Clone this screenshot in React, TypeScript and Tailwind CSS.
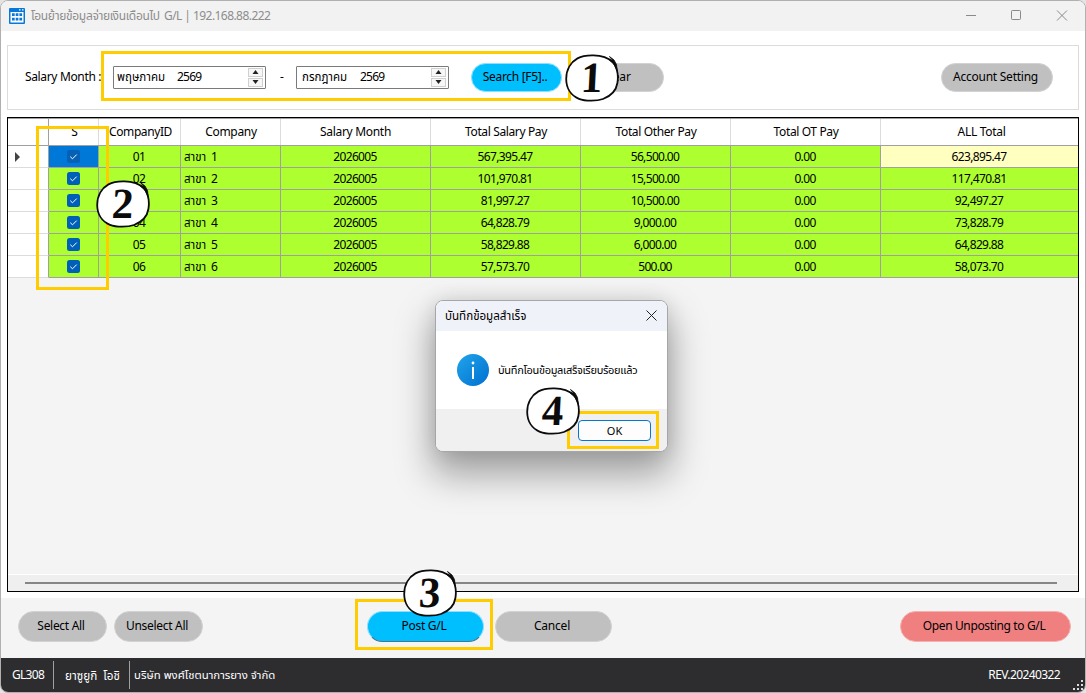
import React from 'react';

type Row = { id: string; name: string; month: string; salary: string; other: string; ot: string; all: string };

const rows: Row[] = [
  { id: '01', name: 'สาขา 1', month: '2026005', salary: '567,395.47', other: '56,500.00', ot: '0.00', all: '623,895.47' },
  { id: '02', name: 'สาขา 2', month: '2026005', salary: '101,970.81', other: '15,500.00', ot: '0.00', all: '117,470.81' },
  { id: '03', name: 'สาขา 3', month: '2026005', salary: '81,997.27', other: '10,500.00', ot: '0.00', all: '92,497.27' },
  { id: '04', name: 'สาขา 4', month: '2026005', salary: '64,828.79', other: '9,000.00', ot: '0.00', all: '73,828.79' },
  { id: '05', name: 'สาขา 5', month: '2026005', salary: '58,829.88', other: '6,000.00', ot: '0.00', all: '64,829.88' },
  { id: '06', name: 'สาขา 6', month: '2026005', salary: '57,573.70', other: '500.00', ot: '0.00', all: '58,073.70' },
];

const columns = 'grid grid-cols-[41px_50px_82px_100px_150px_150px_150px_150px_197px]';

function Pill({ label, className }: { label: string; className: string }) {
  return (
    <button className={`flex shrink-0 items-center justify-center rounded-full border pr-[3px] pb-px whitespace-nowrap ${className}`}>
      {label}
    </button>
  );
}

function MonthPicker({ month, year, className }: { month: string; year: string; className: string }) {
  return (
    <div className={`flex h-[23px] shrink-0 items-center rounded-[1px] border border-[#7a7a7a] bg-white pr-[2px] ${className}`}>
      <span className="whitespace-nowrap text-[11.5px]">{month}</span>
      <span className="ml-auto w-[71px] tracking-[-0.8px]">{year}</span>
      <span className="flex flex-col gap-px">
        <span className="flex h-[9px] w-[15px] items-center justify-center border border-[#d0d0d0] bg-[#f7f7f7]">
          <svg width="7" height="4" viewBox="0 0 7 4"><path d="M3.5 0L6.5 4H.5z" fill="#222" /></svg>
        </span>
        <span className="flex h-[9px] w-[15px] items-center justify-center border border-[#d0d0d0] bg-[#f7f7f7]">
          <svg width="7" height="4" viewBox="0 0 7 4"><path d="M3.5 4L6.5 0H.5z" fill="#222" /></svg>
        </span>
      </span>
    </div>
  );
}

function Check({ active }: { active: boolean }) {
  return (
    <svg width="13" height="13" viewBox="0 0 13 13">
      <rect width="13" height="13" rx="2.5" fill={active ? '#0560b6' : '#005fb8'} />
      <path d="M3.3 6.7L5.5 8.8L9.7 4.6" fill="none" stroke="#fff" strokeWidth="1" />
    </svg>
  );
}

function Step({ n, className }: { n: string; className: string }) {
  return (
    <div className={`absolute flex h-[48px] w-[54px] items-center justify-center ${className}`}>
      <svg className="absolute inset-0" width="54" height="48" viewBox="0 0 54 48">
        <path
          d="M27 1.4C35 1.1 43 3.6 48.5 8.5C52 14 53.6 22 52.4 29C51 38 44.5 42.5 38 45C32 47.2 20 47.3 14 44.8C6 41.5 1.2 34 1.2 25C1.2 15.5 6 8 12.5 4.4C17 2 22 1.5 27 1.4Z"
          fill="#fff"
          stroke="#0b0b0b"
          strokeWidth="1.8"
        />
        <path d="M44.5 2.5L49 6L51.5 10.5C51.8 13 52 15 52.2 17C50.5 12 48 8.5 43 5L48 7z" fill="#0b0b0b" stroke="#0b0b0b" strokeWidth=".8" />
      </svg>
      <span className="relative -skew-x-3 font-['Liberation_Serif',serif] text-[43px] leading-[48px] font-bold text-[#0b0b0b]">{n}</span>
    </div>
  );
}

function HeaderCell({ children, className = '' }: { children?: React.ReactNode; className?: string }) {
  return (
    <div className={`flex items-center justify-center overflow-hidden border-r border-[#dcdcdc] whitespace-nowrap ${className}`}>{children}</div>
  );
}

function Cell({ children, className = 'pt-px' }: { children: React.ReactNode; className?: string }) {
  return (
    <div className={`flex items-center justify-center border-r border-b border-[#a0a0a0] pr-px tracking-[-0.65px] whitespace-nowrap ${className}`}>
      {children}
    </div>
  );
}

export default function App() {
  return (
    <div className="h-[693px] w-[1086px] overflow-hidden bg-[#e4e4e4] font-['Noto_Sans','Noto_Sans_Thai','Loma',sans-serif] text-[12px] leading-[16px] text-black">
      <div className="relative flex h-[693px] w-[1086px] flex-col overflow-hidden rounded-[8px] border border-[#b0b0b0] bg-white">
        <header className="flex h-[30px] shrink-0 items-center bg-[#f2f2f2] pl-[8px] text-[#8d8d8d]">
          <svg width="16" height="16" viewBox="0 0 16 16" className="shrink-0">
            <rect width="16" height="16" rx="1" fill="#0878d8" />
            <path d="M1.5 4h13v10.5h-13z" fill="#fff" />
            <path d="M10 1.2h1.5v1.3H10zM13 1.2h1.5v1.3H13z" fill="#fff" />
            <path d="M3 5.3h2.7V8H3zM6.7 5.3h2.7V8H6.7zM10.4 5.3h2.7V8h-2.7zM3 9.7h2.7v2.7H3zM6.7 9.7h2.7v2.7H6.7zM10.4 9.7h2.7v2.7h-2.7z" fill="#0878d8" />
          </svg>
          <span className="ml-[6px] flex shrink-0 whitespace-nowrap">
            <span className="w-[133px] tracking-[-0.32px]">โอนย้ายข้อมูลจ่ายเงินเดือนไป</span>
            <span className="tracking-[-0.56px]">G/L | 192.168.88.222</span>
          </span>
          <svg className="mr-[17px] ml-auto -translate-y-px" width="102" height="12" viewBox="0 0 102 12" fill="none" stroke="#8a8a8a">
            <path d="M0 6.5h10M91 1.5l10 10M101 1.5l-10 10" />
            <rect x="45.5" y="1.5" width="9" height="9" rx=".8" />
          </svg>
        </header>

        <main className="flex h-[567px] shrink-0 flex-col px-[6px] pt-[14px]">
          <section className="flex h-[65px] w-[1072px] shrink-0 items-center border border-[#dcdcdc] pr-[25px] pb-px pl-[17px]">
            <span className="w-[88px] whitespace-nowrap tracking-[-0.35px]">Salary Month :</span>
            <MonthPicker month="พฤษภาคม" year="2569" className="w-[153px] pl-[3px]" />
            <span className="w-[30px] pl-[2px] text-center">-</span>
            <MonthPicker month="กรกฎาคม" year="2569" className="w-[153px] pl-[5px]" />
            <Pill label="Search [F5].." className="ml-[22px] h-[29px] w-[91px] border-[#8fe0ff] bg-[#00bfff] tracking-[-0.3px]" />
            <Pill label="Clear" className="ml-[10px] h-[29px] w-[92px] border-[#d2d2d2] bg-[#c0c0c0] tracking-[-0.1px]" />
            <Pill label="Account Setting" className="ml-auto h-[29px] w-[112px] border-[#d2d2d2] bg-[#c0c0c0] tracking-[-0.25px]" />
          </section>

          <section className="mt-[7px] flex h-[475px] w-[1072px] shrink-0 flex-col border border-black bg-[#f4f4f4]">
            <div className={`${columns} h-[28px] shrink-0 border-t border-b border-[#a0a0a0] bg-white tracking-[-0.3px]`}>
              <HeaderCell className="border-r-[#a0a0a0]" />
              <HeaderCell className="pl-[2px]">S</HeaderCell>
              <HeaderCell className="pl-[2px] tracking-[-0.4px]">CompanyID</HeaderCell>
              <HeaderCell className="pl-px">Company</HeaderCell>
              <HeaderCell>Salary Month</HeaderCell>
              <HeaderCell className="pl-px tracking-[-0.37px]">Total Salary Pay</HeaderCell>
              <HeaderCell className="pl-px tracking-[-0.37px]">Total Other Pay</HeaderCell>
              <HeaderCell className="pl-px tracking-[-0.37px]">Total OT Pay</HeaderCell>
              <HeaderCell className="border-r-0 pl-[4px]">ALL Total</HeaderCell>
            </div>
            {rows.map((r, i) => (
              <div key={r.id} className={`${columns} h-[22px] shrink-0 bg-[#adff2f]`}>
                <div className="flex items-center border-r border-b border-r-[#a0a0a0] border-b-[#dcdcdc] bg-white pt-px pl-[7px]">
                  {i === 0 && (
                    <svg width="5" height="10" viewBox="0 0 5 10"><path d="M0 0L5 5L0 10z" fill="#444" /></svg>
                  )}
                </div>
                <Cell className={i === 0 ? 'bg-[#0078d7]' : 'bg-[#adff2f]'}><Check active={i === 0} /></Cell>
                <Cell>{r.id}</Cell>
                <Cell className="justify-start pl-[3px]">
                  <span className="w-[27px] text-[11.5px] tracking-[0px]">{r.name.split(' ')[0]}</span>
                  <span>{r.name.split(' ')[1]}</span>
                </Cell>
                <Cell>{r.month}</Cell>
                <Cell>{r.salary}</Cell>
                <Cell>{r.other}</Cell>
                <Cell>{r.ot}</Cell>
                <Cell className={`border-r-0 pt-px ${i === 0 ? 'bg-[#ffffc0]' : ''}`}>{r.all}</Cell>
              </div>
            ))}
            <div className="mt-auto h-[17px] shrink-0 border-t border-white bg-[#efefef] pt-[7px] pl-[17px]">
              <div className="h-[2px] w-[1032px] bg-[#868686]" />
            </div>
          </section>
        </main>

        <section className="flex h-[60px] shrink-0 items-start bg-[#f4f4f4] pt-[13px] pr-[14px] pl-[17px]">
          <Pill label="Select All" className="h-[31px] w-[89px] border-[#d2d2d2] bg-[#c0c0c0] tracking-[-0.3px]" />
          <Pill label="Unselect All" className="ml-[7px] h-[31px] w-[89px] border-[#d2d2d2] bg-[#c0c0c0] tracking-[-0.3px]" />
          <Pill label="Post G/L" className="ml-[164px] h-[31px] w-[117px] border-[#8fe0ff] border-b-[#45758a] bg-[#00bfff] tracking-[-0.25px]" />
          <Pill label="Cancel" className="ml-[11px] h-[31px] w-[117px] border-[#d2d2d2] bg-[#c0c0c0] tracking-[-0.2px]" />
          <Pill label="Open Unposting to G/L" className="ml-auto h-[31px] w-[171px] border-[#f5b0b0] bg-[#f08080] tracking-[-0.36px]" />
        </section>

        <footer className="flex h-[34px] shrink-0 items-center bg-[#2d2d30] text-white">
          <span className="w-[52px] pl-[11px] tracking-[-0.7px]">GL308</span>
          <span className="h-[28px] w-px bg-[#a0a0a0]" />
          <span className="w-[75px] pl-[11px] text-[11.7px] whitespace-pre">ยาซูยูกิ  โอชิ</span>
          <span className="h-[28px] w-px bg-[#a0a0a0]" />
          <span className="pl-[4px] text-[11.4px] whitespace-nowrap">บริษัท พงศ์โชตนาการยาง จำกัด</span>
          <span className="ml-auto tracking-[-0.6px]">REV.20240322</span>
          <svg className="mr-px ml-[12px] self-end" width="12" height="13" viewBox="0 0 12 13" fill="#ddd">
            <path d="M9 1h2v2H9zM5 5h2v2H5zM9 5h2v2H9zM1 9h2v2H1zM5 9h2v2H5zM9 9h2v2H9z" />
          </svg>
        </footer>

        <div className="absolute top-[299px] left-[434px] flex h-[152px] w-[233px] flex-col overflow-hidden rounded-[8px] border border-[#a6a6a6] bg-white shadow-[0_20px_36px_3px_rgba(0,0,0,0.34),0_0_20px_rgba(0,0,0,0.1)]">
          <div className="flex h-[30px] shrink-0 items-center justify-between bg-[#f0f2f9] pr-[10px] pb-px pl-[9px]">
            <span className="text-[11.6px] whitespace-nowrap">บันทึกข้อมูลสำเร็จ</span>
            <svg width="11" height="11" viewBox="0 0 11 11" stroke="#222"><path d="M.5.5l10 10M10.5.5l-10 10" /></svg>
          </div>
          <div className="flex h-[78px] shrink-0 items-center pl-[21px]">
            <svg width="32" height="32" viewBox="0 0 32 32" className="shrink-0">
              <defs>
                <linearGradient id="info" x1="0" y1="0" x2="1" y2="1"><stop stopColor="#20a5ea" /><stop offset="1" stopColor="#006fd0" /></linearGradient>
              </defs>
              <circle cx="16" cy="16" r="16" fill="url(#info)" />
              <path d="M15 13h2v12h-2z" fill="#fff" />
              <circle cx="16" cy="9" r="1.4" fill="#fff" />
            </svg>
            <span className="ml-[9px] text-[11px] tracking-[-0.3px] whitespace-nowrap">บันทึกโอนข้อมูลเสร็จเรียบร้อยแล้ว</span>
          </div>
          <div className="flex flex-1 items-center justify-end bg-[#f0f0f0] pt-px pr-[16px]">
            <button className="flex h-[21px] w-[73px] items-center justify-center rounded-[4px] border border-[#0078d4] bg-[#fdfdfd] text-[11px]">OK</button>
          </div>
        </div>

        <div className="absolute top-[50px] left-[100px] h-[50px] w-[470px] border-[3px] border-[#ffcc00]" />
        <div className="absolute top-[125px] left-[35px] h-[164px] w-[73px] border-[3px] border-[#ffcc00]" />
        <div className="absolute top-[598px] left-[354px] h-[51px] w-[138px] border-[3px] border-[#ffcc00]" />
        <div className="absolute top-[410px] left-[566px] h-[38px] w-[92px] border-[3px] border-[#ffcc00]" />
        <Step n="1" className="top-[53px] left-[564px]" />
        <Step n="2" className="top-[179px] left-[95px]" />
        <Step n="3" className="top-[568px] left-[402px]" />
        <Step n="4" className="top-[386px] left-[525px]" />
      </div>
    </div>
  );
}
